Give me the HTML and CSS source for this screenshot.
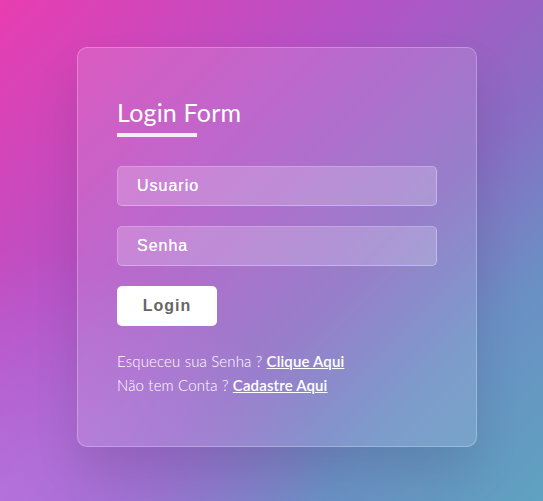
FILE: index.html
```html
<!DOCTYPE html>
<html lang="pt">
<head>
<meta charset="utf-8">
<title>Login Form</title>
<link rel="stylesheet" href="styles.css">
</head>
<body>
<div class="card">
  <h2 class="title">Login Form</h2>
  <form class="form">
    <input class="field" type="text" placeholder="Usuario">
    <input class="field" type="password" placeholder="Senha">
    <button class="btn" type="button">Login</button>
  </form>
  <p class="links">Esqueceu sua Senha ? <a href="#">Clique Aqui</a><br>Não tem Conta ? <a href="#">Cadastre Aqui</a></p>
</div>
</body>
</html>
```
FILE: styles.css
```css
* { box-sizing: border-box; }
html, body { margin: 0; height: 100%; }
body {
  width: 543px;
  height: 501px;
  overflow: hidden;
  background:
    radial-gradient(ellipse 60% 50% at 0% 100%, rgba(190,120,230,0.7), rgba(190,120,230,0) 100%),
    linear-gradient(135deg, #e83db0 0%, #b552c6 35%, #8a6cc4 60%, #6b8fc4 78%, #5fa2c0 100%);
  padding: 47px 0 0 77px;
  font-family: "Lato", sans-serif;
}
.card {
  width: 400px;
  height: 400px;
  border-radius: 10px;
  background: rgba(255,255,255,0.12);
  border: 1px solid rgba(255,255,255,0.25);
  box-shadow: 0 25px 45px rgba(0,0,0,0.1);
  padding: 50px 39px 40px;
}
.title {
  position: relative;
  margin: 0 0 39px;
  font-size: 25px;
  font-weight: 400;
  line-height: 29px;
  color: #fff;
  letter-spacing: 0.2px;
}
.title::before {
  content: "";
  position: absolute;
  left: 0;
  bottom: -10px;
  width: 80px;
  height: 4px;
  background: #f0f0f5;
}
.form {
  display: flex;
  flex-direction: column;
  gap: 20px;
  align-items: flex-start;
}
.field {
  width: 320px;
  height: 40px;
  border-radius: 5px;
  border: 1px solid rgba(255,255,255,0.3);
  border-top-color: rgba(255,255,255,0.2);
  border-left-color: rgba(255,255,255,0.2);
  background: rgba(255,255,255,0.2);
  padding: 0 19px;
  font-family: "Liberation Sans", Arial, sans-serif;
  font-size: 16px;
  letter-spacing: 1px;
  color: #fff;
  text-shadow: 0 0 0.3px #fff;
  outline: none;
}
.field::placeholder { color: #fff; }
.btn {
  width: 100px;
  height: 40px;
  border: none;
  border-radius: 5px;
  background: #fff;
  color: #666;
  font-family: "Liberation Sans", Arial, sans-serif;
  font-size: 16px;
  font-weight: 700;
  letter-spacing: 1px;
  padding: 0;
}
.links {
  margin: 23px 0 0;
  font-size: 15px;
  font-weight: 300;
  line-height: 24px;
  letter-spacing: 0.15px;
  color: #fff;
}
.links a {
  color: #fff;
  font-weight: 600;
  text-decoration: underline;
}
```
